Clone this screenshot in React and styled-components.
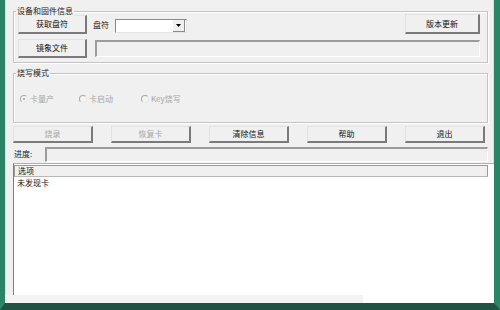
import styled, { createGlobalStyle } from "styled-components";

const GlobalStyle = createGlobalStyle`
  body {
    margin: 0;
    background: #ffffff;
    font-family: "Noto Sans CJK SC", "Liberation Sans", sans-serif;
  }
`;

const Frame = styled.div`
  width: 500px;
  height: 310px;
  box-sizing: border-box;
  border-style: solid;
  border-width: 0 6px 7px 5px;
  border-color: #2b8466 #2b8466 #1f5444 #2b8466;
  box-shadow: inset 1px 0 0 #cfe4da, inset -1px 0 0 #cfe4da,
    inset 0 -1px 0 #cfe4da;
  background: #f0f0f0;
  display: flex;
  flex-direction: column;
  padding: 0 6px 0 8px;
  font-size: 8px;
  line-height: 10px;
  color: #111;
`;

const Group = styled.div`
  position: relative;
  box-sizing: border-box;
  height: ${(p) => p.$h}px;
  margin-top: ${(p) => p.$top}px;
  border: 1px solid #c4c4c4;
  box-shadow: inset 1px 1px 0 #ffffff, 1px 1px 0 #ffffff;
  padding: 3px 7px 0 4px;
  display: flex;
  flex-direction: column;
  gap: 5px;
`;

const Caption = styled.span`
  position: absolute;
  left: 2px;
  top: -6px;
  padding: 0 1px;
  background: #f0f0f0;
  color: #222;
`;

const Row = styled.div`
  display: flex;
  align-items: center;
  gap: ${(p) => p.$gap || 0}px;
`;

const Button = styled.button`
  box-sizing: border-box;
  width: ${(p) => p.$w}px;
  height: ${(p) => p.$h || 19}px;
  margin-left: ${(p) => p.$ml || 0}px;
  padding: 0;
  font: inherit;
  color: ${(p) => (p.disabled ? "#a6a6a6" : "#111")};
  background: #f0f0f0;
  border-style: solid;
  border-width: 1px 2px 2px 1px;
  border-color: #e2e2e2 #7a7a7a #7a7a7a #e2e2e2;
`;

const Label = styled.span`
  width: ${(p) => p.$w}px;
  flex: none;
  color: #222;
`;

const Combo = styled.div`
  box-sizing: border-box;
  width: 72px;
  height: 14px;
  margin-top: 2px;
  background: #fff;
  border-style: solid;
  border-width: 1px;
  border-color: #8a8a8a #e4e4e4 #e4e4e4 #8a8a8a;
  display: flex;
  justify-content: flex-end;
  align-items: center;
`;

const ComboArrow = styled.div`
  width: 11px;
  height: 11px;
  margin-right: 1px;
  background: #f0f0f0;
  border-right: 1px solid #8a8a8a;
  border-bottom: 1px solid #8a8a8a;
  display: flex;
  align-items: center;
  justify-content: center;
`;

const Sunken = styled.div`
  box-sizing: border-box;
  flex: 1;
  height: ${(p) => p.$h}px;
  margin-left: ${(p) => p.$ml || 0}px;
  background: #f0f0f0;
  border-style: solid;
  border-width: 2px 1px 1px 2px;
  border-color: #9c9c9c #ffffff #ffffff #9c9c9c;
`;

const RadioRow = styled.div`
  flex: 1;
  display: flex;
  align-items: center;
  padding-left: 2px;
`;

const RadioItem = styled.label`
  width: ${(p) => p.$w}px;
  display: flex;
  align-items: center;
  gap: 2px;
  color: #a6a6a6;
`;

const RadioDot = styled.span`
  box-sizing: border-box;
  width: 8px;
  height: 8px;
  border-radius: 50%;
  border: 1px solid #a8a8a8;
  border-right-color: #e8e8e8;
  border-bottom-color: #e8e8e8;
  background: #f4f4f4;
  display: flex;
  align-items: center;
  justify-content: center;
  &::after {
    content: "";
    width: 2px;
    height: 2px;
    border-radius: 50%;
    background: ${(p) => (p.$on ? "#9a9a9a" : "transparent")};
  }
`;

const ActionBar = styled.div`
  display: flex;
  justify-content: space-between;
  width: 472px;
  margin-top: 3px;
`;

const ProgressRow = styled.div`
  display: flex;
  align-items: center;
  margin-top: 4px;
  margin-left: 1px;
`;

const List = styled.div`
  height: 132px;
  margin: 1px -6px 0 0;
  background: #fff;
  border-left: 1px solid #7e7e7e;
  border-top: 1px solid #b0b0b0;
  display: flex;
  flex-direction: column;
`;

const ListHeader = styled.div`
  box-sizing: border-box;
  width: 474px;
  height: 12px;
  margin: 1px 0 0 0;
  padding-left: 3px;
  background: #f0f0f0;
  border: 1px solid #9a9a9a;
  border-bottom-color: #b8b8b8;
  line-height: 10px;
  color: #111;
`;

const ListItem = styled.div`
  padding-left: 3px;
  margin-top: 1px;
  color: #111;
`;

const BottomStrip = styled.div`
  height: 8px;
  margin: 0 -6px 0 -8px;
  background: linear-gradient(to right, #f3f3f3 0 358px, #ffffff 358px);
`;

const modes = [
  { label: "卡量产", w: 59, on: true },
  { label: "卡启动", w: 62 },
  { label: "Key烧写", w: 80 },
];

const actions = [
  { label: "烧录", disabled: true },
  { label: "恢复卡", disabled: true },
  { label: "清除信息" },
  { label: "帮助" },
  { label: "退出" },
];

export default function App() {
  return (
    <>
      <GlobalStyle />
      <Frame>
        <Group $top={11} $h={52}>
          <Caption>设备和固件信息</Caption>
          <Row>
            <Button $w={69}>获取盘符</Button>
            <Label $w={22} style={{ marginLeft: 6 }}>
              盘符
            </Label>
            <Combo>
              <ComboArrow>
                <svg width="5" height="3" viewBox="0 0 5 3">
                  <path d="M0 0h5L2.5 3z" fill="#000" />
                </svg>
              </ComboArrow>
            </Combo>
            <Button $w={75} $h={20} style={{ marginLeft: "auto", marginTop: -1 }}>
              版本更新
            </Button>
          </Row>
          <Row>
            <Button $w={69}>镜象文件</Button>
            <Sunken $h={17} $ml={8} />
          </Row>
        </Group>

        <Group $top={10} $h={50}>
          <Caption>烧写模式</Caption>
          <RadioRow>
            {modes.map((m) => (
              <RadioItem key={m.label} $w={m.w}>
                <RadioDot $on={m.on} />
                {m.label}
              </RadioItem>
            ))}
          </RadioRow>
        </Group>

        <ActionBar>
          {actions.map((a) => (
            <Button key={a.label} $w={80} $h={17} disabled={a.disabled}>
              {a.label}
            </Button>
          ))}
        </ActionBar>

        <ProgressRow>
          <Label $w={31}>进度:</Label>
          <Sunken $h={15} />
        </ProgressRow>

        <List>
          <ListHeader>选项</ListHeader>
          <ListItem>未发现卡</ListItem>
        </List>
        <BottomStrip />
      </Frame>
    </>
  );
}
